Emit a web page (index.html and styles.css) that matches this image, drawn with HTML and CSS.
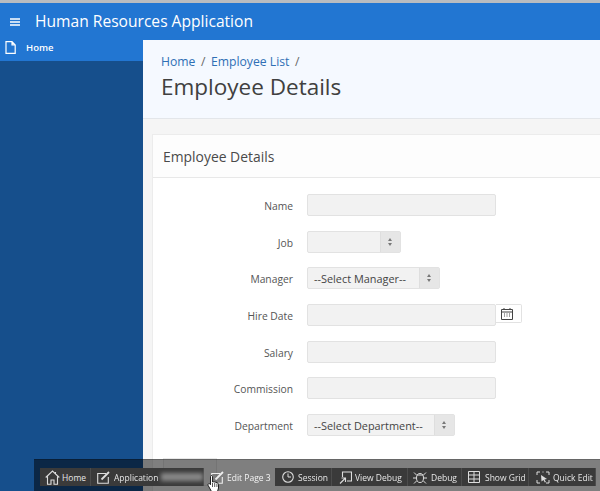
FILE: index.html
```html
<!DOCTYPE html>
<html lang="en">
<head>
<meta charset="utf-8">
<title>Employee Details</title>
<link rel="stylesheet" href="styles.css">
</head>
<body>
<div class="topstrip"></div>
<header class="appbar">
  <svg class="burger" width="10" height="8" viewBox="0 0 10 8"><path d="M0 1h10M0 4h10M0 7h10" stroke="#fff" stroke-width="1.6"/></svg>
  <span class="appname">Human Resources Application</span>
</header>
<div class="shell">
  <nav class="sidebar">
    <div class="navitem">
      <svg class="navicon" width="11" height="13" viewBox="0 0 11 13"><path d="M1 .7h6l3.2 3.2v8.4H1zM7 .7v3.2h3.2" fill="none" stroke="#fff" stroke-width="1.2"/></svg>
      <span>Home</span>
    </div>
  </nav>
  <main class="main">
    <section class="hero">
      <div class="crumbs"><a>Home</a><i>/</i><a>Employee List</a><i>/</i></div>
      <h1>Employee Details</h1>
    </section>
    <section class="content">
      <div class="card">
        <h2 class="cardhead">Employee Details</h2>
        <form class="form">
          <div class="row"><label>Name</label><div class="field wide"></div></div>
          <div class="row"><label>Job</label><div class="select job"><span></span><b class="updown"></b></div></div>
          <div class="row"><label>Manager</label><div class="select mgr"><span>--Select Manager--</span><b class="updown"></b></div></div>
          <div class="row"><label>Hire Date</label><div class="field wide"></div>
            <div class="calbtn"><svg width="12" height="12" viewBox="0 0 12 12"><path d="M.5 1.5h11v10H.5zM.5 4h11" fill="none" stroke="#444"/><path d="M3 0v2M9 0v2" stroke="#444"/><path d="M3 6h1M5.500 6h1M8 6h1M3 8h1M5.500 8h1M8 8h1" stroke="#444" stroke-width="1.200"/></svg></div></div>
          <div class="row"><label>Salary</label><div class="field wide"></div></div>
          <div class="row"><label>Commission</label><div class="field wide"></div></div>
          <div class="row"><label>Department</label><div class="select dept"><span>--Select Department--</span><b class="updown"></b></div></div>
        </form>
        <div class="ghostbtn"></div>
      </div>
    </section>
  </main>
</div>
<div class="devbar">
  <div class="devitem w-home"><svg width="15" height="15" viewBox="0 0 15 15"><path d="M.7 7.500 7.500 1l6.800 6.500M2.500 6.500v7.800h3.500v-4.300h3v4.300h3.500V6.500M10.500 2v2.500" fill="none" stroke="#ddd" stroke-width="1.100"/></svg><span>Home</span></div>
  <div class="devitem w-app"><svg width="13" height="13" viewBox="0 0 13 13"><path d="M9 2.500H.7v9.800h10.600V6" fill="none" stroke="#ddd" stroke-width="1.100"/><path d="M4.500 8.500 12 1" stroke="#ddd" stroke-width="1.800"/></svg><span>Application</span><em class="blurred"></em></div>
  <div class="devitem w-edit clear"><svg width="13" height="13" viewBox="0 0 13 13"><path d="M9 2.500H.7v9.800h10.600V6" fill="none" stroke="#eee" stroke-width="1.100"/><path d="M4.500 8.500 12 1" stroke="#eee" stroke-width="1.800"/></svg><span>Edit Page 3</span></div>
  <div class="devitem w-sess"><svg width="12" height="12" viewBox="0 0 12 12"><circle cx="6" cy="6" r="5.300" fill="none" stroke="#ddd" stroke-width="1.100"/><path d="M6 2.500V6h3" fill="none" stroke="#ddd"/></svg><span>Session</span></div>
  <div class="devitem w-view"><svg width="13" height="13" viewBox="0 0 13 13"><path d="M3.500 6V1h9v9H8" fill="none" stroke="#ddd" stroke-width="1.100"/><path d="M1 12.500 6 7.500M2.500 7H6.500v4" fill="none" stroke="#ddd" stroke-width="1.100"/></svg><span>View Debug</span></div>
  <div class="devitem w-debug"><svg width="14" height="13" viewBox="0 0 14 13"><ellipse cx="7" cy="7" rx="3.500" ry="4.500" fill="none" stroke="#ddd"/><path d="M3.500 4 1 1.500M10.500 4 13 1.500M3 7H0M11 7h3M3.500 10 1 12.500M10.500 10 13 12.500M4 4h6" fill="none" stroke="#ddd"/></svg><span>Debug</span></div>
  <div class="devitem w-grid"><svg width="12" height="12" viewBox="0 0 12 12"><path d="M.5.500h11v11H.5zM.5 4h11M.5 8h11M6 .5v11" fill="none" stroke="#ddd"/></svg><span>Show Grid</span></div>
  <div class="devitem w-quick"><svg width="14" height="13" viewBox="0 0 14 13"><path d="M1 4V1h3M10 1h3v3M13 9v3h-3M4 12H1V9M6.500 1h1" fill="none" stroke="#ddd"/><path d="m5 4 6 4-2.500.5L10 11l-1.200.6L7.500 9 5.500 10.500z" fill="#ddd"/></svg><span>Quick Edit</span></div>
  <svg class="hand" width="13" height="19" viewBox="0 0 13 19"><path d="M3.500 1.500c0-1.300 2-1.300 2 0v5.500l1-.2 1.200.2 1.200.3 1.300.4c.8.300 1.300 1 1.300 2v3.300l-1 3.500v2H4.500v-2L1.200 10.500c-.8-1.500.8-2.500 1.800-1.500l.5.700z" fill="#fff" stroke="#111" stroke-width=".9"/><path d="M5.500 8v4M7.700 8v4M9.900 8.500V12" stroke="#111" stroke-width=".7"/></svg>
</div>
</body>
</html>
```
FILE: styles.css
```css
* { box-sizing: border-box; }
html, body { margin: 0; height: 100%; }
body {
  width: 600px;
  height: 491px;
  overflow: hidden;
  font-family: "Open Sans", "Noto Sans", sans-serif;
  color: #404040;
  background: #f5f5f5;
  display: flex;
  flex-direction: column;
}
.topstrip { height: 3px; background: #b9bcc0; flex: none; }
.appbar {
  height: 37px;
  flex: none;
  background: #2276d2;
  display: flex;
  align-items: center;
  padding-left: 10px;
  color: #fff;
}
.burger { margin-right: 15px; }
.appname { font-size: 15.6px; line-height: 37px; white-space: nowrap; }
.shell { flex: 1; display: flex; min-height: 0; }
.sidebar { width: 143px; flex: none; background: #164f8c; }
.navitem {
  height: 21px;
  background: #2276d2;
  display: flex;
  align-items: center;
  padding: 0 0 7px 5px;
  font-size: 9.5px;
  font-weight: 600;
  color: #fff;
}
.navicon { margin-right: 10px; }
.main { flex: 1; display: flex; flex-direction: column; min-width: 0; background: #f5f5f5; }
.hero {
  height: 79px;
  flex: none;
  background: #f5f9ff;
  border-bottom: 1px solid #e3e6ea;
  padding: 12px 0 0 18px;
}
.crumbs { font-size: 12.2px; line-height: 19px; color: #666; display: flex; }
.crumbs a { color: #2f6fb5; }
.crumbs i { font-style: normal; margin: 0 5.5px; }
.crumbs i:last-child { margin-right: 0; }
h1 { margin: 0; font-size: 22.5px; line-height: 32px; font-weight: 400; color: #404040; white-space: nowrap; }
.content { padding: 15px 0 0 9px; flex: 1; min-height: 0; }
.card {
  background: #fff;
  border: 1px solid #ececec;
  border-right: 0;
  height: 360px;
}
.cardhead {
  margin: 0;
  height: 43px;
  padding-left: 10px;
  font-size: 13.9px;
  line-height: 43px;
  font-weight: 400;
  color: #4a4a4a;
  background: #fdfdfd;
  border-bottom: 1px solid #e8e8e8;
}
.form { padding-top: 16px; display: flex; flex-direction: column; gap: 14.7px; }
.row { display: flex; align-items: flex-start; height: 22px; font-size: 10.3px; color: #555; }
.row label { width: 140px; text-align: right; line-height: 24px; margin-right: 14px; }
.field { height: 22px; background: #f2f2f2; border: 1px solid #e2e2e2; border-radius: 2px; }
.wide { width: 189px; }
.select {
  height: 22px;
  background: #f2f2f2;
  border: 1px solid #e2e2e2;
  border-radius: 2px;
  display: flex;
  font-size: 10.9px;
  line-height: 21px;
  color: #444;
}
.select span { flex: 1; padding-left: 6px; white-space: nowrap; }
.updown {
  width: 20px;
  flex: none;
  background: #e6e6e6;
  border-left: 1px solid #dedede;
  position: relative;
}
.updown::before, .updown::after {
  content: "";
  position: absolute;
  left: 7px;
  border-left: 2.500px solid transparent;
  border-right: 2.500px solid transparent;
}
.updown::before { top: 6px; border-bottom: 3px solid #777; }
.updown::after { top: 11px; border-top: 3px solid #777; }
.job { width: 94px; }
.mgr { width: 133px; }
.dept { width: 148px; }
.calbtn {
  width: 26px;
  height: 19px;
  background: #fff;
  border: 1px solid #e2e2e2;
  border-left: 0;
  border-radius: 0 2px 2px 0;
  display: flex;
  align-items: center;
  justify-content: center;
  padding-right: 3px;
}
.ghostbtn { width: 54px; height: 28px; margin: 22px 0 0 10px; background: #fafafa; border: 1px solid #e8e8e8; }
.devbar {
  position: fixed;
  left: 34px;
  top: 459px;
  width: 566px;
  height: 32px;
  background: rgba(0, 0, 0, 0.5);
  border-top: 1px solid rgba(0, 0, 0, 0.2);
  padding: 8px 0 0 6px;
  display: flex;
}
.devitem {
  height: 18px;
  background: #3a3a3a;
  border-right: 1px solid #4c4c4c;
  display: flex;
  align-items: center;
  padding-left: 6px;
  font-size: 8.5px;
  color: #e6e6e6;
  white-space: nowrap;
  flex: none;
}
.devitem svg { margin-right: 4px; flex: none; }
.devitem.clear { background: transparent; border-right: 0; color: #f4f4f4; }
.blurred { width: 44px; height: 8px; margin-left: 3px; background: #888; filter: blur(2px); }
.w-home { width: 51px; padding-left: 5px; }
.w-home svg { margin-right: 2px; }
.w-app { width: 113px; }
.w-edit { width: 71px; padding-left: 7px; }
.w-edit svg { margin-right: 3px; }
.w-sess { width: 57px; padding-left: 7px; }
.w-view { width: 76px; padding-left: 7px; }
.w-view svg { margin-right: 3px; }
.w-debug { width: 54px; padding-left: 5px; }
.w-grid { width: 67px; }
.w-grid svg { margin-right: 5px; }
.w-quick { width: 67px; padding-left: 7px; }
.w-quick svg { margin-right: 3px; }
.hand { position: absolute; left: 173px; top: 15px; }
```
